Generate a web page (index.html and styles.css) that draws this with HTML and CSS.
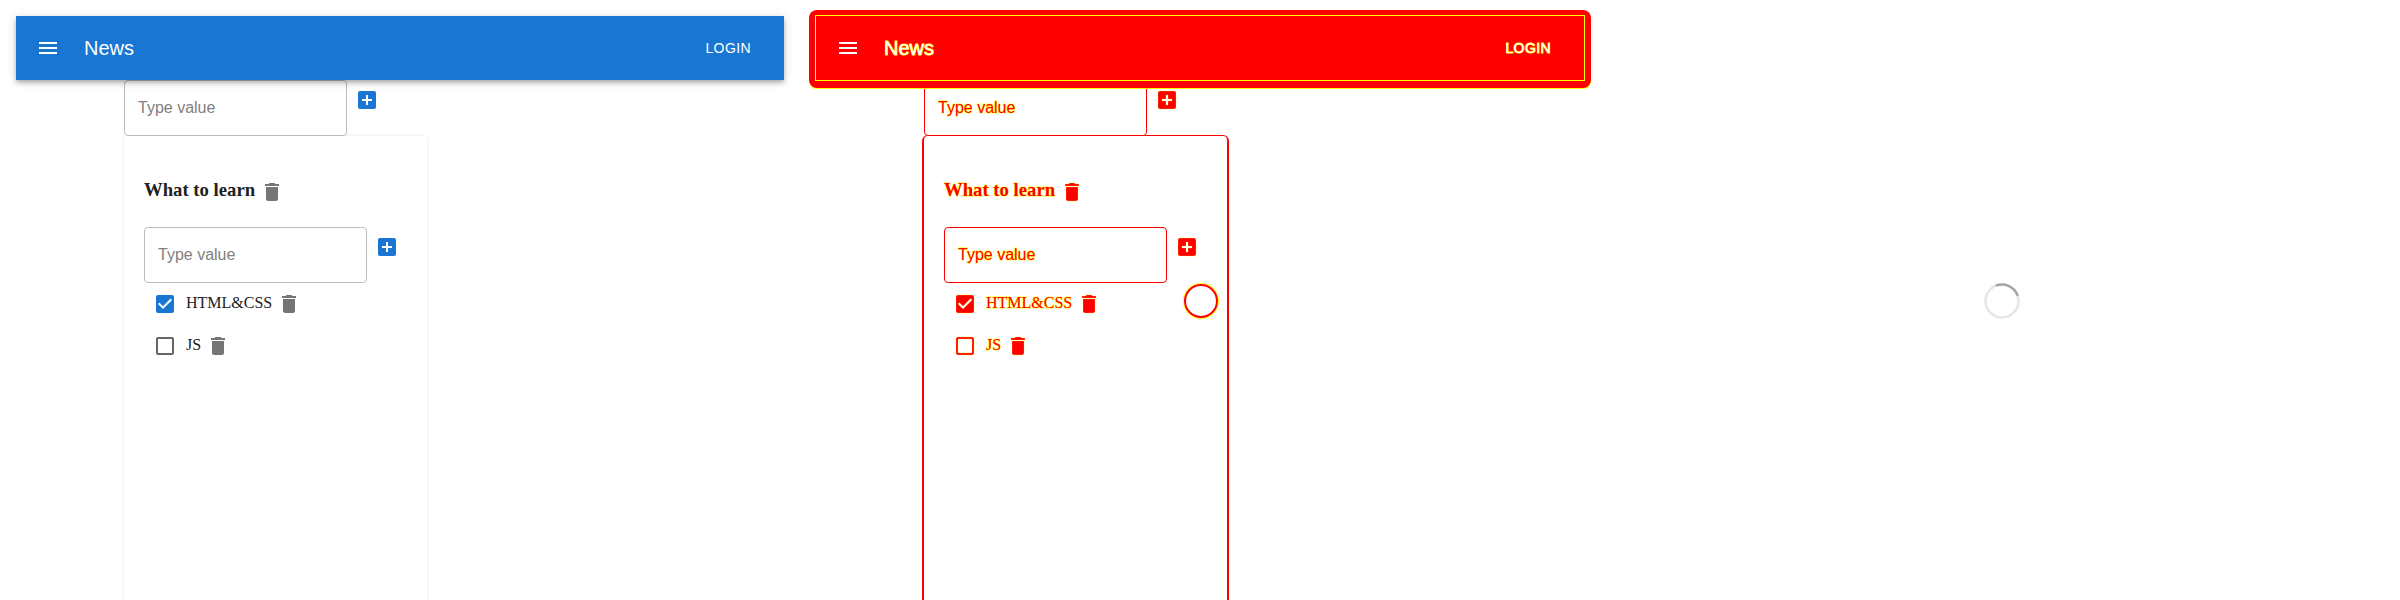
FILE: index.html
```html
<!DOCTYPE html>
<html lang="en">
<head>
    <meta charset="UTF-8">
    <meta name="viewport" content="width=device-width, initial-scale=1.0">
    <title>News</title>
    <link rel="stylesheet" href="styles.css">
</head>
<body>
    <svg class="icon-defs">
        <symbol id="i-menu" viewBox="0 0 24 24"><path d="M3 18h18v-2H3v2zm0-5h18v-2H3v2zm0-7v2h18V6H3z"/></symbol>
        <symbol id="i-add" viewBox="0 0 24 24"><path d="M19 3H5c-1.11 0-2 .9-2 2v14c0 1.1.89 2 2 2h14c1.1 0 2-.9 2-2V5c0-1.1-.9-2-2-2zm-2 10h-4v4h-2v-4H7v-2h4V7h2v4h4v2z"/></symbol>
        <symbol id="i-trash" viewBox="0 0 24 24"><path d="M6 19c0 1.1.9 2 2 2h8c1.1 0 2-.9 2-2V7H6v12zM19 4h-3.5l-1-1h-5l-1 1H5v2h14V4z"/></symbol>
        <symbol id="i-checked" viewBox="0 0 24 24"><path d="M19 3H5c-1.11 0-2 .9-2 2v14c0 1.1.89 2 2 2h14c1.1 0 2-.9 2-2V5c0-1.1-.9-2-2-2zm-9 14l-5-5 1.41-1.41L10 14.17l7.59-7.59L19 8l-9 9z"/></symbol>
        <symbol id="i-unchecked" viewBox="0 0 24 24"><path d="M19 5v14H5V5h14m0-2H5c-1.1 0-2 .9-2 2v14c0 1.1.9 2 2 2h14c1.1 0 2-.9 2-2V5c0-1.1-.9-2-2-2z"/></symbol>
    </svg>

    <div class="page">
        <!-- Normal render -->
        <div class="column">
            <div class="appbar">
                <svg class="icon menu-icon"><use href="#i-menu"/></svg>
                <span class="appbar-title">News</span>
                <span class="login">LOGIN</span>
            </div>
            <div class="content">
                <div class="add-form">
                    <input class="text-field" type="text" placeholder="Type value">
                    <svg class="icon add-icon"><use href="#i-add"/></svg>
                </div>
                <div class="card">
                    <div class="card-title">
                        <h3>What to learn</h3>
                        <svg class="icon trash-icon"><use href="#i-trash"/></svg>
                    </div>
                    <div class="add-form">
                        <input class="text-field" type="text" placeholder="Type value">
                        <svg class="icon add-icon"><use href="#i-add"/></svg>
                    </div>
                    <div class="task">
                        <svg class="icon check-icon checked"><use href="#i-checked"/></svg>
                        <span class="task-label">HTML&amp;CSS</span>
                        <svg class="icon trash-icon"><use href="#i-trash"/></svg>
                    </div>
                    <div class="task">
                        <svg class="icon check-icon"><use href="#i-unchecked"/></svg>
                        <span class="task-label">JS</span>
                        <svg class="icon trash-icon"><use href="#i-trash"/></svg>
                    </div>
                </div>
            </div>
        </div>

        <!-- Same page, highlighted -->
        <div class="column highlighted">
            <div class="appbar">
                <svg class="icon menu-icon"><use href="#i-menu"/></svg>
                <span class="appbar-title">News</span>
                <span class="login">LOGIN</span>
            </div>
            <div class="content">
                <div class="add-form">
                    <input class="text-field" type="text" placeholder="Type value">
                    <svg class="icon add-icon"><use href="#i-add"/></svg>
                </div>
                <div class="card">
                    <div class="card-title">
                        <h3>What to learn</h3>
                        <svg class="icon trash-icon"><use href="#i-trash"/></svg>
                    </div>
                    <div class="add-form">
                        <input class="text-field" type="text" placeholder="Type value">
                        <svg class="icon add-icon"><use href="#i-add"/></svg>
                    </div>
                    <div class="task">
                        <svg class="icon check-icon checked"><use href="#i-checked"/></svg>
                        <span class="task-label">HTML&amp;CSS</span>
                        <svg class="icon trash-icon"><use href="#i-trash"/></svg>
                    </div>
                    <div class="task">
                        <svg class="icon check-icon"><use href="#i-unchecked"/></svg>
                        <span class="task-label">JS</span>
                        <svg class="icon trash-icon"><use href="#i-trash"/></svg>
                    </div>
                </div>
            </div>
            <div class="ripple-ring"></div>
        </div>

        <!-- Loading state -->
        <div class="column">
            <svg class="spinner" viewBox="0 0 36 36">
                <circle class="spinner-track" cx="18" cy="18" r="16.5"/>
                <circle class="spinner-arc" cx="18" cy="18" r="16.5"/>
            </svg>
        </div>
    </div>
</body>
</html>
```

FILE: styles.css
```css
html, body {
    margin: 0;
    padding: 0;
    height: 100%;
    overflow: hidden;
    background-color: #fff;
    font-family: "Liberation Serif", serif;
    font-size: 16px;
    color: #212121;
}

.icon-defs {
    display: none;
}

.page {
    display: flex;
    height: 100vh;
}

.column {
    position: relative;
    flex: none;
    width: 800px;
    box-sizing: border-box;
    padding: 16px 0 0 16px;
}

.icon {
    display: block;
    flex: none;
    width: 24px;
    height: 24px;
    fill: currentColor;
}

/* App bar */
.appbar {
    position: relative;
    z-index: 2;
    display: flex;
    align-items: center;
    width: 768px;
    height: 64px;
    box-sizing: border-box;
    padding: 0 24px 0 20px;
    background-color: #1976d2;
    color: #fff;
    font-family: "Liberation Sans", Arial, sans-serif;
    box-shadow: 0 2px 4px -1px rgba(0, 0, 0, .2), 0 4px 5px 0 rgba(0, 0, 0, .14), 0 1px 10px 0 rgba(0, 0, 0, .12);
}

.menu-icon {
    margin-right: 24px;
}

.appbar-title {
    font-size: 20px;
}

.login {
    margin-left: auto;
    margin-right: 9px;
    font-size: 14px;
    letter-spacing: .4px;
}

/* Content */
.content {
    margin-left: 108px;
}

.add-form {
    display: flex;
    align-items: flex-start;
}

.text-field {
    width: 223px;
    height: 56px;
    box-sizing: border-box;
    padding: 0 13px;
    border: 1px solid #bdbdbd;
    border-radius: 4px;
    background-color: #fff;
    font-family: "Liberation Sans", Arial, sans-serif;
    font-size: 16px;
    outline: none;
}

.text-field::placeholder {
    color: #808080;
    opacity: 1;
}

.add-icon {
    margin: 8px 0 0 8px;
    color: #1976d2;
}

.card {
    width: 303px;
    height: 520px;
    box-sizing: border-box;
    padding: 44px 20px 0;
    border-radius: 4px;
    box-shadow: 0 0 3px rgba(0, 0, 0, .14);
}

.card-title {
    display: flex;
    align-items: center;
    height: 24px;
    margin-bottom: 23px;
}

.card-title h3 {
    margin: 0 5px 4px 0;
    font-size: 18.72px;
    font-weight: bold;
}

.trash-icon {
    color: #757575;
}

.task {
    display: flex;
    align-items: center;
    height: 42px;
    padding-left: 9px;
}

.check-icon {
    margin-right: 9px;
    color: #666;
}

.check-icon.checked {
    color: #1976d2;
}

.task-label {
    margin: 0 5px 2px 0;
}

/* Highlighted copy */
.highlighted,
.highlighted .trash-icon,
.highlighted .add-icon,
.highlighted .check-icon {
    color: #f00;
}

.highlighted .icon {
    stroke: #ff0;
    stroke-width: .25px;
}

.highlighted h3,
.highlighted .task-label,
.highlighted .appbar-title,
.highlighted .login {
    -webkit-text-stroke: 1px #ff0;
    paint-order: stroke fill;
}

.highlighted .appbar {
    background-color: #f00;
    box-shadow: none;
    outline: 1px solid #ff0;
}

.highlighted .appbar::before {
    content: "";
    position: absolute;
    z-index: -1;
    top: -6px;
    left: -7px;
    right: -7px;
    bottom: -8px;
    border-radius: 8px;
    background-color: #f00;
    box-shadow: 0 1px 0 #ff0;
}

.highlighted .menu-icon {
    color: #fff;
    stroke: none;
}

.highlighted .appbar-title,
.highlighted .login {
    color: #fff;
}

.highlighted .text-field {
    border-color: #f00;
}

.highlighted .text-field::placeholder {
    color: #f00;
    -webkit-text-stroke: 1px #ff0;
    paint-order: stroke fill;
}

.highlighted .card {
    box-shadow: 0 1px 0 2px #f00;
}

.ripple-ring {
    position: absolute;
    top: 284px;
    left: 384px;
    width: 30px;
    height: 30px;
    border: 2px solid #f00;
    border-radius: 50%;
    box-shadow: 0 0 0 1px #ff0;
}

/* Spinner */
.spinner {
    position: absolute;
    top: 283px;
    left: 384px;
    width: 36px;
    height: 36px;
    fill: none;
    stroke-width: 2.5;
}

.spinner-track {
    stroke: #e6e6e6;
}

.spinner-arc {
    stroke: #a6a6a6;
    stroke-dasharray: 27 200;
    transform: rotate(-112deg);
    transform-origin: 18px 18px;
}
```
